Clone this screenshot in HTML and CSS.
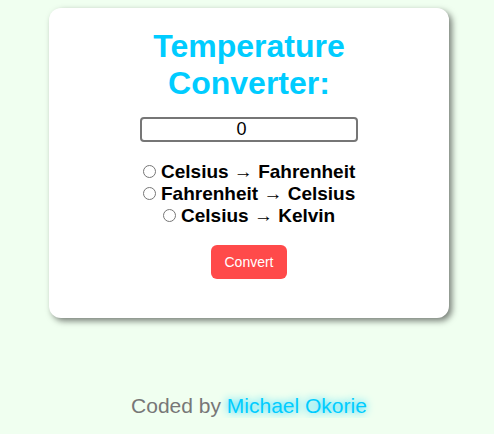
FILE: index.html
```html
<!DOCTYPE html>
<html>
<head>
<meta charset="utf-8">
<link rel="stylesheet" href="styles.css">
</head>
<body>
<div class="card">
  <h1 class="title">Temperature<br>Converter:</h1>
  <input class="temp" type="number" value="0">
  <div class="options">
    <label class="opt"><input type="radio" name="c"> Celsius → Fahrenheit</label>
    <label class="opt"><input type="radio" name="c"> Fahrenheit → Celsius</label>
    <label class="opt"><input type="radio" name="c"> Celsius → Kelvin</label>
  </div>
  <button class="btn">Convert</button>
</div>
<p class="footer">Coded by <span class="name">Michael Okorie</span></p>
</body>
</html>
```
FILE: styles.css
```css
html, body {
  margin: 0;
  padding: 0;
}
body {
  background: #f0fff0;
  font-family: "Liberation Sans", Arial, sans-serif;
  padding: 8px 0 0 4px;
}
.card {
  width: 400px;
  height: 310px;
  box-sizing: border-box;
  margin: 0 auto;
  background: #fff;
  border-radius: 12px;
  box-shadow: 3px 3px 6px rgba(0,0,0,0.5);
  display: flex;
  flex-direction: column;
  align-items: center;
  padding-top: 20px;
}
.title {
  margin: 0;
  font-size: 32px;
  line-height: 37px;
  color: #00ccff;
  text-align: center;
  font-weight: bold;
}
.temp {
  margin-top: 15px;
  width: 218px;
  height: 25px;
  box-sizing: border-box;
  border: 2px solid #767676;
  border-radius: 4px;
  font-family: "Liberation Sans", Arial, sans-serif;
  font-size: 18px;
  text-align: center;
  padding: 0;
  color: #000;
}
.options {
  margin-top: 19px;
  display: flex;
  flex-direction: column;
  align-items: center;
}
.opt {
  display: block;
  font-weight: bold;
  font-size: 19px;
  line-height: 22px;
  text-align: center;
}
.opt input {
  margin: 0;
  width: 13px;
  height: 13px;
  vertical-align: 0;
}
.btn {
  margin-top: 18px;
  width: 76px;
  height: 34px;
  background: #ff4a4a;
  color: #fff;
  border: none;
  border-radius: 6px;
  font-family: "Liberation Sans", Arial, sans-serif;
  font-size: 14px;
}
.footer {
  margin: 76px 0 0 0;
  text-align: center;
  font-size: 21px;
  line-height: 24px;
  color: #777;
}
.name {
  color: #00ccff;
  text-shadow: 0 0 8px #00ccff;
}
```
